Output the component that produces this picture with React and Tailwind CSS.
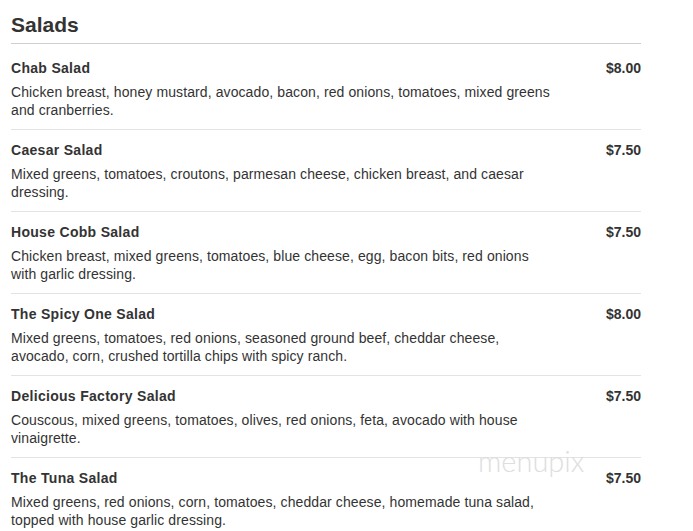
const salads = [
  {
    name: 'Chab Salad',
    price: '$8.00',
    desc: 'Chicken breast, honey mustard, avocado, bacon, red onions, tomatoes, mixed greens and cranberries.',
  },
  {
    name: 'Caesar Salad',
    price: '$7.50',
    desc: 'Mixed greens, tomatoes, croutons, parmesan cheese, chicken breast, and caesar dressing.',
  },
  {
    name: 'House Cobb Salad',
    price: '$7.50',
    desc: 'Chicken breast, mixed greens, tomatoes, blue cheese, egg, bacon bits, red onions with garlic dressing.',
  },
  {
    name: 'The Spicy One Salad',
    price: '$8.00',
    desc: 'Mixed greens, tomatoes, red onions, seasoned ground beef, cheddar cheese, avocado, corn, crushed tortilla chips with spicy ranch.',
  },
  {
    name: 'Delicious Factory Salad',
    price: '$7.50',
    desc: 'Couscous, mixed greens, tomatoes, olives, red onions, feta, avocado with house vinaigrette.',
  },
  {
    name: 'The Tuna Salad',
    price: '$7.50',
    desc: 'Mixed greens, red onions, corn, tomatoes, cheddar cheese, homemade tuna salad, topped with house garlic dressing.',
  },
]

export default function App() {
  return (
    <div className="relative h-[531px] overflow-hidden bg-white text-[#333] font-['Liberation_Sans',Arial,sans-serif]">
      <div className="ml-[11px] w-[630px]">
        <h2 className="pt-[13px] pb-[6px] border-b border-[#cfcfcf] text-[21px] leading-[24px] font-bold">
          Salads
        </h2>

        {salads.map((item, i) => (
          <div
            key={item.name}
            className={
              i === 0
                ? 'flex justify-between pt-[15px] pb-[10px]'
                : 'flex justify-between pt-[11px] pb-[10px] border-t border-[#e3e3e3]'
            }
          >
            <div className="w-[542px]">
              <div className="text-[14px] leading-[18px] font-bold tracking-[0.3px]">{item.name}</div>
              <p className="mt-[6px] text-[14px] leading-[18px] tracking-[0.1px]">{item.desc}</p>
            </div>
            <div className="text-[14px] leading-[18px] font-bold">{item.price}</div>
          </div>
        ))}
      </div>

      {/* watermark */}
      <span className="absolute left-[478px] top-[445px] text-[29px] leading-[32px] font-light text-[#dedede] font-['Lato',sans-serif]">
        menupix
      </span>
    </div>
  )
}
